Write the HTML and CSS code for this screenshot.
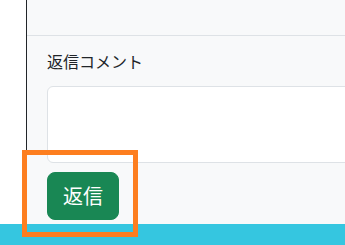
FILE: index.html
```html
<!DOCTYPE html>
<html lang="ja">
<head>
<meta charset="utf-8">
<title>返信</title>
<link rel="stylesheet" href="styles.css">
</head>
<body>
<div class="layout">
  <aside class="sidebar"></aside>
  <main class="main">
    <div class="topbar"></div>
    <form class="reply-form">
      <label class="form-label" for="reply">返信コメント</label>
      <textarea id="reply" class="form-control"></textarea>
      <button type="button" class="btn-reply">返信</button>
    </form>
  </main>
</div>
<footer class="footer"></footer>
<div class="highlight"></div>
</body>
</html>
```
FILE: styles.css
```css
html, body {
  margin: 0;
  padding: 0;
  overflow: hidden;
  width: 345px;
  height: 245px;
  background: #ffffff;
  font-family: "Noto Sans CJK JP", "Noto Sans", sans-serif;
  color: #212529;
}

.layout {
  display: flex;
  height: 224px;
}

.sidebar {
  width: 26px;
  flex: 0 0 26px;
  background: #ffffff;
  border-right: 1px solid #212529;
}

.main {
  flex: 1;
  min-width: 0;
  overflow: hidden;
  background: #f8f9fa;
}

.topbar {
  height: 35px;
  border-bottom: 1px solid #dee2e6;
}

.reply-form {
  margin: 0;
  padding: 13px 0 0 20px;
}

.form-label {
  display: block;
  font-size: 16px;
  line-height: 24px;
  margin-bottom: 13px;
  color: #212529;
  font-weight: 400;
}

.form-control {
  display: block;
  box-sizing: border-box;
  width: 420px;
  height: 77px;
  margin: 0;
  padding: 6px 12px;
  background: #ffffff;
  border: 1px solid #dee2e6;
  border-radius: 6px;
  resize: none;
  font-family: inherit;
  font-size: 16px;
}

.btn-reply {
  display: block;
  box-sizing: border-box;
  margin-top: 9px;
  height: 48px;
  padding: 0 15px;
  background: #198754;
  color: #ffffff;
  border: 1px solid #198754;
  border-radius: 8px;
  font-family: "Noto Sans CJK JP", "Noto Sans", sans-serif;
  font-size: 20px;
  line-height: 30px;
  font-weight: 400;
}

.footer {
  height: 21px;
  background: #35c6e0;
}

.highlight {
  position: absolute;
  left: 22px;
  top: 150px;
  width: 116px;
  height: 87px;
  box-sizing: border-box;
  border: 5px solid #fd7e1f;
}
```
